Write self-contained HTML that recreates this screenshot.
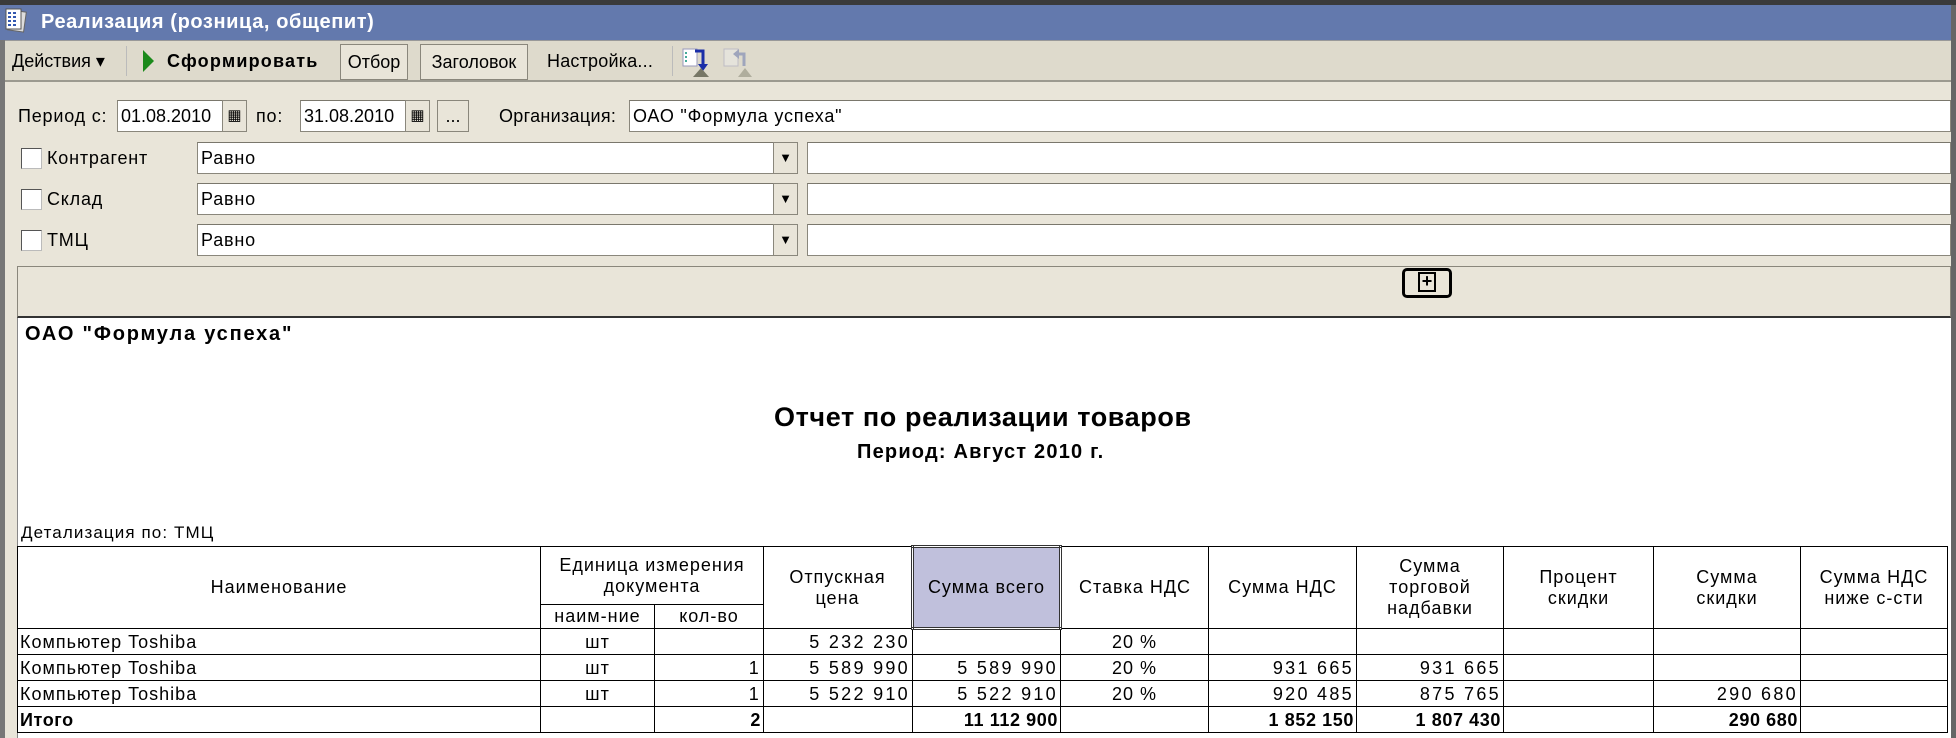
<!DOCTYPE html>
<html><head><meta charset="utf-8"><style>
*{margin:0;padding:0;box-sizing:border-box}
body{width:1956px;height:738px;overflow:hidden;background:#e9e5d9;font-family:"Liberation Sans",Arial,sans-serif;position:relative;color:#000;letter-spacing:0.8px}
.a{position:absolute}
.inp{position:absolute;background:#fff;border:1px solid #8a877c;border-top-color:#7a776c;font-size:18px;line-height:30px;padding-left:3px;white-space:nowrap}
.btn{position:absolute;background:#e9e5d9;border:1px solid #8a877c;font-size:18px;text-align:center;letter-spacing:0}
.lbl{position:absolute;font-size:18px;white-space:nowrap}
.chk{position:absolute;width:21px;height:21px;background:#fff;border:1px solid #555;border-right-color:#bbb;border-bottom-color:#bbb}
table{border-collapse:collapse;position:absolute;left:17px;top:545px;font-size:18px;table-layout:fixed;letter-spacing:1px}
td{border:1px solid #000;padding:0 2px;white-space:nowrap;overflow:hidden}
.h td{text-align:center;line-height:21px}
.r td{height:26px;line-height:24px}
.n{text-align:right;letter-spacing:2.3px}
.c{text-align:center}
.t td{font-weight:bold;letter-spacing:0.6px}
</style></head><body>
<div class="a" style="left:0;top:0;width:1956px;height:5px;background:#3a3a3a"></div>
<div class="a" style="left:0;top:5px;width:1956px;height:35px;background:#6379ad"></div>
<svg class="a" style="left:4px;top:7px" width="26" height="28" viewBox="0 0 26 28"><rect x="5" y="4" width="16" height="20" fill="#ddd" stroke="#666" transform="rotate(8 13 14)"/><rect x="2" y="2" width="15" height="20" fill="#fff" stroke="#555"/><g fill="#3358b0"><rect x="4" y="5" width="3" height="2"/><rect x="9" y="5" width="3" height="2"/><rect x="4" y="9" width="3" height="2"/><rect x="9" y="9" width="3" height="2"/><rect x="4" y="13" width="3" height="2"/><rect x="9" y="13" width="3" height="2"/><rect x="4" y="17" width="3" height="2"/><rect x="9" y="17" width="3" height="2"/></g></svg>
<div class="lbl" style="left:41px;top:11px;color:#fff;font-weight:bold;font-size:20px;letter-spacing:0.6px">Реализация (розница, общепит)</div>
<div class="a" style="left:0;top:40px;width:1956px;height:42px;background:#dedacc;border-top:1px solid #999;border-bottom:2px solid #9c9a90"></div>
<div class="a" style="left:0;top:40px;width:5px;height:698px;background:#777"></div>
<div class="a" style="left:1951px;top:5px;width:5px;height:733px;background:#666"></div>
<div class="lbl" style="left:12px;top:51px;letter-spacing:0">Действия ▾</div>
<div class="a" style="left:126px;top:46px;width:1px;height:30px;background:#bbb"></div>
<svg class="a" style="left:143px;top:50px" width="12" height="22"><polygon points="0,0 11,11 0,22" fill="#1b8a1b"/></svg>
<div class="lbl" style="left:167px;top:51px;font-weight:bold;letter-spacing:1.2px">Сформировать</div>
<div class="btn" style="left:340px;top:44px;width:68px;height:36px;line-height:34px">Отбор</div>
<div class="btn" style="left:420px;top:44px;width:108px;height:36px;line-height:34px">Заголовок</div>
<div class="lbl" style="left:547px;top:51px;letter-spacing:0.2px">Настройка...</div>
<div class="a" style="left:672px;top:46px;width:1px;height:30px;background:#bbb"></div>
<svg class="a" style="left:681px;top:46px" width="32" height="32"><rect x="2" y="3" width="14" height="17" fill="#fff" stroke="#99b"/><g fill="#4a9"><rect x="4" y="6" width="2" height="2"/><rect x="4" y="10" width="2" height="2"/><rect x="4" y="14" width="2" height="2"/></g><path d="M14 5 H22 V20" stroke="#1a2ea8" stroke-width="3" fill="none"/><polygon points="17,18 27,18 22,25" fill="#1a2ea8"/><polygon points="12,31 20,22 28,31" fill="#776"/></svg>
<svg class="a" style="left:722px;top:46px" width="32" height="32" opacity="0.45"><rect x="2" y="3" width="14" height="17" fill="#eee" stroke="#99b"/><path d="M22 20 V8 H16" stroke="#56a" stroke-width="3" fill="none"/><polygon points="17,3 17,13 11,8" fill="#56a"/><polygon points="16,31 23,22 30,31" fill="#776"/></svg>

<div class="lbl" style="left:18px;top:106px">Период с:</div>
<div class="inp" style="left:117px;top:100px;width:107px;height:32px;letter-spacing:0">01.08.2010</div>
<div class="btn" style="left:222px;top:100px;width:25px;height:32px;line-height:30px;font-size:15px">▦</div>
<div class="lbl" style="left:256px;top:106px">по:</div>
<div class="inp" style="left:300px;top:100px;width:107px;height:32px;letter-spacing:0">31.08.2010</div>
<div class="btn" style="left:405px;top:100px;width:25px;height:32px;line-height:30px;font-size:15px">▦</div>
<div class="btn" style="left:437px;top:100px;width:32px;height:32px;line-height:30px">...</div>
<div class="lbl" style="left:499px;top:106px;letter-spacing:0.3px">Организация:</div>
<div class="inp" style="left:629px;top:100px;width:1322px;height:32px">ОАО "Формула успеха"</div>

<div class="chk" style="left:21px;top:148px"></div><div class="lbl" style="left:47px;top:148px">Контрагент</div>
<div class="inp" style="left:197px;top:142px;width:601px;height:32px">Равно</div>
<div class="btn" style="left:773px;top:142px;width:25px;height:32px;line-height:30px;font-size:13px">▼</div>
<div class="inp" style="left:807px;top:142px;width:1144px;height:32px"></div>

<div class="chk" style="left:21px;top:189px"></div><div class="lbl" style="left:47px;top:189px">Склад</div>
<div class="inp" style="left:197px;top:183px;width:601px;height:32px">Равно</div>
<div class="btn" style="left:773px;top:183px;width:25px;height:32px;line-height:30px;font-size:13px">▼</div>
<div class="inp" style="left:807px;top:183px;width:1144px;height:32px"></div>

<div class="chk" style="left:21px;top:230px"></div><div class="lbl" style="left:47px;top:230px">ТМЦ</div>
<div class="inp" style="left:197px;top:224px;width:601px;height:32px">Равно</div>
<div class="btn" style="left:773px;top:224px;width:25px;height:32px;line-height:30px;font-size:13px">▼</div>
<div class="inp" style="left:807px;top:224px;width:1144px;height:32px"></div>

<div class="a" style="left:17px;top:266px;width:1934px;height:52px;border:1px solid #8a877c;border-bottom:2px solid #333;background:#e9e5d9"></div>
<div class="a" style="left:1402px;top:268px;width:50px;height:30px;border:3px solid #000;border-radius:5px"></div>
<div class="a" style="left:1418px;top:272px;width:18px;height:20px;border:2px solid #000;font-size:18px;line-height:14px;text-align:center;font-weight:bold;letter-spacing:0">+</div>

<div class="a" style="left:17px;top:318px;width:1934px;height:420px;background:#fff;border-left:1px solid #888"></div>
<div class="lbl" style="left:25px;top:323px;font-size:20px;font-weight:bold;letter-spacing:1.8px">ОАО "Формула успеха"</div>
<div class="lbl" style="left:774px;top:402px;font-size:27px;font-weight:bold;letter-spacing:0.6px">Отчет по реализации товаров</div>
<div class="lbl" style="left:857px;top:441px;font-size:20px;font-weight:bold;letter-spacing:1.2px">Период: Август 2010 г.</div>
<div class="lbl" style="left:21px;top:523px;font-size:17px;letter-spacing:1.1px">Детализация по: ТМЦ</div>

<table>
<colgroup><col style="width:523px"><col style="width:114px"><col style="width:109px"><col style="width:149px"><col style="width:148px"><col style="width:148px"><col style="width:148px"><col style="width:147px"><col style="width:150px"><col style="width:147px"><col style="width:147px"></colgroup>
<tr class="h"><td rowspan="2" style="height:82px">Наименование</td><td colspan="2" style="height:58px">Единица измерения<br>документа</td><td rowspan="2">Отпускная<br>цена</td><td rowspan="2" style="background:#c0c0dc;border:3px double #333">Сумма всего</td><td rowspan="2">Ставка НДС</td><td rowspan="2">Сумма НДС</td><td rowspan="2">Сумма<br>торговой<br>надбавки</td><td rowspan="2">Процент<br>скидки</td><td rowspan="2">Сумма<br>скидки</td><td rowspan="2">Сумма НДС<br>ниже с-сти</td></tr>
<tr class="h"><td style="height:24px">наим-ние</td><td>кол-во</td></tr>
<tr class="r"><td>Компьютер Toshiba</td><td class="c">шт</td><td></td><td class="n">5 232 230</td><td></td><td class="c">20 %</td><td></td><td></td><td></td><td></td><td></td></tr>
<tr class="r"><td>Компьютер Toshiba</td><td class="c">шт</td><td class="n">1</td><td class="n">5 589 990</td><td class="n">5 589 990</td><td class="c">20 %</td><td class="n">931 665</td><td class="n">931 665</td><td></td><td></td><td></td></tr>
<tr class="r"><td>Компьютер Toshiba</td><td class="c">шт</td><td class="n">1</td><td class="n">5 522 910</td><td class="n">5 522 910</td><td class="c">20 %</td><td class="n">920 485</td><td class="n">875 765</td><td></td><td class="n">290 680</td><td></td></tr>
<tr class="r t"><td>Итого</td><td></td><td class="n">2</td><td></td><td class="n">11 112 900</td><td></td><td class="n">1 852 150</td><td class="n">1 807 430</td><td></td><td class="n">290 680</td><td></td></tr>
</table>
</body></html>
